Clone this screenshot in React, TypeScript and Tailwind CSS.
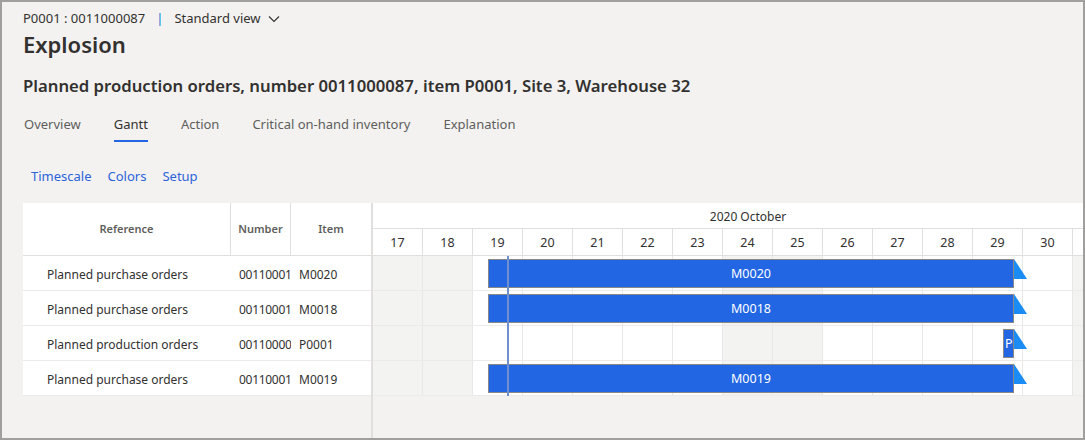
import React from 'react';

const days = [17, 18, 19, 20, 21, 22, 23, 24, 25, 26, 27, 28, 29, 30, 31];
const weekend = [17, 18, 24, 25, 31];

const rows = [
    { ref: 'Planned purchase orders', num: '00110001', item: 'M0020', left: 115, width: 526, label: 'M0020' },
    { ref: 'Planned purchase orders', num: '00110001', item: 'M0018', left: 115, width: 526, label: 'M0018' },
    { ref: 'Planned production orders', num: '00110000', item: 'P0001', left: 630, width: 11, label: 'P0001' },
    { ref: 'Planned purchase orders', num: '00110001', item: 'M0019', left: 115, width: 526, label: 'M0019' },
];

function Flag() {
    return (
        <svg width="14" height="21" viewBox="0 0 14 21" className="absolute top-0">
            <polygon points="0,0 13,20 0,20" fill="#1a8cf3" />
        </svg>
    );
}

export default function App() {
    return (
        <div className="w-[1085px] h-[440px] border-2 border-[#a19f9d] bg-[#f3f2f1] overflow-hidden flex flex-col font-['Segoe_UI','Noto_Sans',sans-serif] text-[#323130]">
            {/* page header */}
            <div className="px-[21px] pt-[8px]">
                <div className="flex items-center text-[13px] h-[18px]">
                    <span>P0001 : 0011000087</span>
                    <span className="mx-[11px] text-[#0078d4]">|</span>
                    <span>Standard view</span>
                    <svg width="12" height="8" viewBox="0 0 12 8" className="ml-[7px]">
                        <path d="M1 1.5 L6 6.5 L11 1.5" stroke="#323130" strokeWidth="1.1" fill="none" />
                    </svg>
                </div>
                <h1 className="text-[22px] font-semibold leading-[30px] mt-[1px]">Explosion</h1>
                <h2 className="text-[16.7px] font-semibold leading-[24px] mt-[15px]">
                    Planned production orders, number 0011000087, item P0001, Site 3, Warehouse 32
                </h2>
                <div className="flex gap-[33px] text-[13px] text-[#605e5c] mt-[17px] pl-[1px]">
                    <span>Overview</span>
                    <span className="text-[#323130] border-b-2 border-[#2266e3] pb-[5px]">Gantt</span>
                    <span>Action</span>
                    <span>Critical on-hand inventory</span>
                    <span>Explanation</span>
                </div>
                <div className="flex gap-[16px] text-[13px] text-[#2b63d9] mt-[25px] pl-[8px]">
                    <span>Timescale</span>
                    <span>Colors</span>
                    <span>Setup</span>
                </div>
            </div>

            {/* grid + gantt */}
            <div className="flex flex-1 ml-[21px] mt-[17px] min-h-0">
                <div className="w-[348px] shrink-0">
                    <div className="flex h-[53px] bg-white border-b border-[#e1dfdd] text-[11px] font-semibold text-[#605e5c]">
                        <div className="w-[208px] border-r border-[#e1dfdd] flex items-center justify-center">Reference</div>
                        <div className="w-[60px] border-r border-[#e1dfdd] flex items-center justify-center">Number</div>
                        <div className="flex-1 flex items-center justify-center">Item</div>
                    </div>
                    {rows.map((r, i) => (
                        <div key={i} className="flex h-[35px] bg-white border-b border-[#edebe9] text-[12px] items-center pt-[3px]">
                            <div className="w-[208px] pl-[24px]">{r.ref}</div>
                            <div className="w-[60px] pl-[8px] overflow-hidden whitespace-nowrap tracking-[-0.3px]">{r.num}</div>
                            <div className="flex-1 pl-[8px]">{r.item}</div>
                        </div>
                    ))}
                </div>

                <div className="flex-1 border-l-2 border-[#e1dfdd] overflow-hidden min-w-0">
                    <div className="w-[750px]">
                        <div className="h-[26px] bg-white border-b border-[#e1dfdd] flex items-center justify-center text-[12px] text-[#323130] pt-[2px]">
                            2020 October
                        </div>
                        <div className="h-[27px] bg-white border-b border-[#e1dfdd] flex text-[12.5px] text-[#323130]">
                            {days.map((d) => (
                                <div key={d} className="w-[50px] shrink-0 border-r border-[#e1dfdd] flex items-center justify-center pt-[3px]">
                                    {d}
                                </div>
                            ))}
                        </div>
                        <div className="relative">
                            {rows.map((r, i) => (
                                <div key={i} className="relative flex h-[35px] border-b border-[#edebe9]">
                                    {days.map((d) => (
                                        <div
                                            key={d}
                                            className={weekend.includes(d)
                                                ? 'w-[50px] shrink-0 border-r border-[#e8e8e6] bg-[#f3f3f1]'
                                                : 'w-[50px] shrink-0 border-r border-[#e8e8e6] bg-white'}
                                        />
                                    ))}
                                    <div
                                        className="absolute top-[3px] h-[29px] bg-[#2266e3] border border-[#8a8886] flex items-center justify-center overflow-hidden text-white text-[12.5px] pt-[2px]"
                                        style={{ left: r.left, width: r.width }}
                                    >
                                        {r.width > 40 ? r.label : <span className="pl-[1px] whitespace-nowrap w-full">{r.label}</span>}
                                    </div>
                                    <div className="absolute top-[3px]" style={{ left: r.left + r.width }}>
                                        <Flag />
                                    </div>
                                </div>
                            ))}
                            <div className="absolute top-0 left-[134px] w-[2px] h-[140px] bg-[#6f8fcf]" />
                        </div>
                    </div>
                </div>
            </div>
        </div>
    );
}
